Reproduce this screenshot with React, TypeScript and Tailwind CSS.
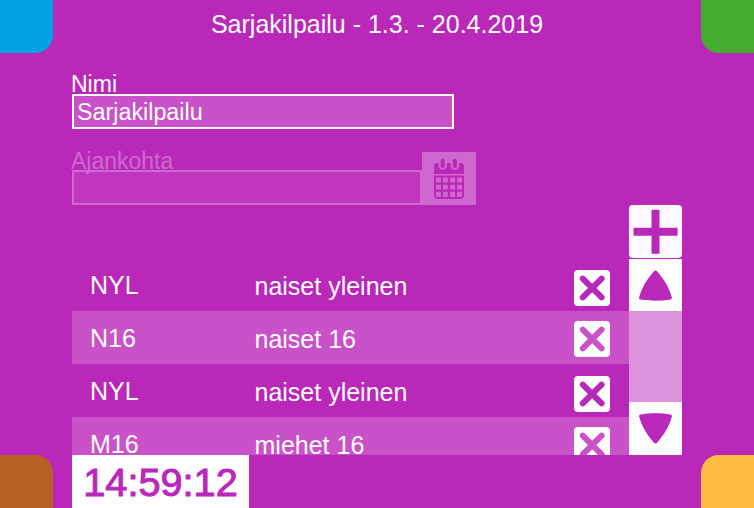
import React from 'react';

const rows = [
  { code: 'NYL', name: 'naiset yleinen' },
  { code: 'N16', name: 'naiset 16' },
  { code: 'NYL', name: 'naiset yleinen' },
  { code: 'M16', name: 'miehet 16' },
];

function RemoveButton() {
  return (
    <button aria-label="Poista" className="block h-9 w-9 rounded-[4px] bg-[#fefdfe]">
      <svg viewBox="0 0 36 36" className="h-9 w-9" fill="none" stroke="currentColor" strokeWidth="6" strokeLinecap="round">
        <path d="M8.800 8.600L27.600 27.400M27.600 8.600L8.800 27.400" />
      </svg>
    </button>
  );
}

function CalendarIcon() {
  return (
    <svg viewBox="0 0 54 53" className="h-[53px] w-[54px]">
      <path
        fill="#ba28ba"
        d="M12 22V15Q12 11 15.500 11H16.400V13.500A4.300 4.300 0 0 0 25 13.500V11H28.600V13.500A4.300 4.300 0 0 0 37.200 13.500V11H38.500Q42 11 42 15V22Z"
      />
      <path stroke="#ba28ba" strokeWidth="4" strokeLinecap="round" d="M20.700 8.700V14M32.900 8.700V14" />
      <path
        fill="#ba28ba"
        fillRule="evenodd"
        d="M12 23.500H42V42.500Q42 47 37.500 47H16.500Q12 47 12 42.500ZM14 25.500V30.600H18.900V25.500ZM21 25.500V30.600H25.900V25.500ZM28.100 25.500V30.600H33V25.500ZM35.100 25.500V30.600H40V25.500ZM14 32.700V37.600H18.900V32.700ZM21 32.700V37.600H25.900V32.700ZM28.100 32.700V37.600H33V32.700ZM35.100 32.700V37.600H40V32.700ZM14 39.800V43.600Q14 44.900 15.300 44.900H18.900V39.800ZM21 39.800V44.900H25.900V39.800ZM28.100 39.800V44.900H33V39.800ZM35.100 39.800V44.900H38.700Q40 44.900 40 43.600V39.800Z"
      />
    </svg>
  );
}

function Triangle({ down = false }: { down?: boolean }) {
  return (
    <svg viewBox="0 0 53 53" className={down ? 'h-[53px] w-[53px] rotate-180' : 'h-[53px] w-[53px]'} fill="#ba28ba">
      <path d="M25 12.300Q26.500 10.600 28 12.300C34.500 19.500 40 28 42.900 38.500Q43.300 40.200 41.500 40.600C32 42.200 21 42.200 11.500 40.600Q9.700 40.200 10.100 38.500C13 28 18.500 19.500 25 12.300Z" />
    </svg>
  );
}

export default function App() {
  return (
    <div className="flex h-[508px] w-[754px] justify-between overflow-hidden bg-[#ba28ba] font-['Liberation_Sans',Arial,sans-serif] text-[#fefdfe]">
      <div className="flex w-[53px] flex-col justify-between">
        <div className="h-[53px] rounded-br-[18px] bg-[#02a1e4]" />
        <div className="h-[53px] rounded-tr-[18px] bg-[#b76026]" />
      </div>

      <main className="flex w-[610px] flex-col">
        <h1 className="h-[70px] text-center text-[25px] leading-[48px]">Sarjakilpailu - 1.3. - 20.4.2019</h1>

        <label className="-ml-px h-6 text-[23px] leading-7">Nimi</label>
        <div className="h-[35px] w-[382px] border-2 border-[#fefdfe] bg-[#c952c9] pl-[3px] text-[23.3px] leading-[33px]">
          Sarjakilpailu
        </div>

        <div className="mt-[23px] flex h-[53px]">
          <div className="flex w-[350px] flex-col">
            <label className="z-10 -ml-px h-[18px] text-[23px] leading-[18px] text-[#ce68ce]">Ajankohta</label>
            <div className="h-[35px] border-2 border-[#ce68ce] bg-[#c037bf]" />
          </div>
          <div className="w-[54px] bg-[#ce68ce]">
            <CalendarIcon />
          </div>
        </div>

        <div className="flex h-[250px] text-[25px]">
          <div className="mt-[53px] h-[197px] w-[557px] overflow-hidden">
            {rows.map((row, i) => (
              <div
                key={i}
                className={
                  i % 2
                    ? 'grid h-[53px] grid-cols-[164.500px_320px_36px] bg-[#c952c9] pl-[18px] text-[#c952c9]'
                    : 'grid h-[53px] grid-cols-[164.500px_320px_36px] pl-[18px] text-[#ba28ba]'
                }
              >
                <span className="h-9 leading-[54px] text-[#fefdfe]">{row.code}</span>
                <span className="h-9 leading-[56px] text-[#fefdfe]">{row.name}</span>
                <div className={i % 2 ? '-ml-[0.200px] h-9 pt-2.5' : '-ml-[0.200px] h-9 pt-3'}>
                  <RemoveButton />
                </div>
              </div>
            ))}
          </div>

          <div className="flex w-[53px] flex-col">
            <button aria-label="Lisää" className="h-[53px] rounded-[4px] bg-[#fcfafe]">
              <svg viewBox="0 0 53 53" className="h-[53px] w-[53px]" stroke="#ba28ba" strokeWidth="8">
                <path d="M26.500 4.700V48.800M4.500 26.800H48.600" />
              </svg>
            </button>
            <div className="mt-px h-[52px] bg-[#fefdfe]">
              <Triangle />
            </div>
            <div className="flex-1 bg-[#dd92dc]" />
            <div className="h-[53px] bg-[#fefdfe]">
              <Triangle down />
            </div>
          </div>
        </div>

        <div className="h-[53px] w-[177px] bg-[#fefdfe] text-center text-[39.700px] leading-[54px] text-[#ba28ba] [-webkit-text-stroke:1px_#ba28ba]">
          14:59:12
        </div>
      </main>

      <div className="flex w-[53px] flex-col justify-between">
        <div className="h-[53px] rounded-bl-[18px] bg-[#45ad2d]" />
        <div className="h-[53px] rounded-tl-[18px] bg-[#ffbb42]" />
      </div>
    </div>
  );
}
